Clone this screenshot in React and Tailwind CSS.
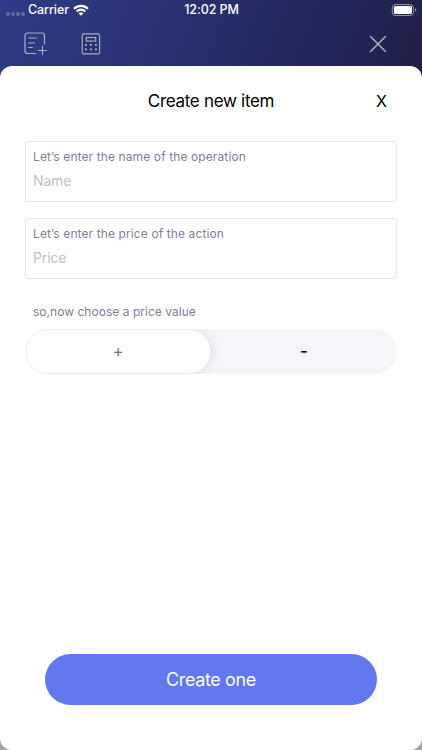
import React from "react";

function StatusBar() {
  return (
    <div className="grid h-5 grid-cols-3 items-center pl-[6px] pr-[5px] text-[12.5px] font-medium leading-5 text-white">
      <div className="flex items-center">
        <div className="mt-[8px] flex gap-[1px]">
          {[0, 1, 2, 3].map((n) => (
            <span key={n} className="size-[4px] rounded-full bg-white/25" />
          ))}
        </div>
        <span className="ml-[3px] tracking-[-0.1px]">Carrier</span>
        <svg className="ml-[4px]" width="16" height="12" viewBox="0 0 16 12" fill="none" stroke="white" strokeWidth="2.1">
          <path d="M1 4.7a10 10 0 0 1 14 0" />
          <path d="M3.7 7.4a6.2 6.2 0 0 1 8.6 0" />
          <path d="M8 11.8 5.6 9.3a3.5 3.5 0 0 1 4.8 0z" fill="white" stroke="none" />
        </svg>
      </div>
      <div className="text-center tracking-[-0.1px]">12:02 PM</div>
      <div className="flex justify-end">
        <svg width="26" height="12" viewBox="0 0 26 12" fill="none">
          <rect x="1.3" y="0.5" width="21.1" height="11" rx="3" stroke="white" strokeOpacity="0.5" />
          <rect x="2.9" y="2" width="18" height="8" rx="1.5" fill="white" />
          <path d="M24 4v4c1.6-.7 1.6-3.3 0-4z" fill="white" fillOpacity="0.5" />
        </svg>
      </div>
    </div>
  );
}

function Toolbar() {
  return (
    <div className="flex h-[46px] items-start pl-6 pr-[35px] pt-3 text-[#aeb0bd]">
      <svg width="24" height="24" viewBox="0 0 24 24" fill="none" stroke="currentColor" strokeWidth="1.2">
        <path d="M20.5 12.5V3.500a2.500 2.500 0 0 0-2.500-2.500H3.500A2.500 2.500 0 0 0 1 3.500v15.500a2.500 2.500 0 0 0 2.500 2.500H12" />
        <path d="M4.300 6h8.500M4.300 11h6.500M4.300 15.500h4.500M18.500 14v9M14 18.500h9" />
      </svg>
      <svg className="ml-[33px]" width="20" height="24" viewBox="0 0 20 24" fill="none" stroke="currentColor" strokeWidth="1.1">
        <rect x="1.200" y="1.900" width="17.400" height="20" rx="1.500" />
        <rect x="5.300" y="5.500" width="9.400" height="3.600" />
        <g fill="currentColor" stroke="none">
          {[12.8, 17.3].map((y) =>
            [5, 10, 15].map((x) => <rect key={x + "-" + y} x={x - 1} y={y - 0.8} width="1.900" height="1.800" />)
          )}
        </g>
      </svg>
      <svg className="ml-auto mt-[3px]" width="18" height="18" viewBox="0 0 18 18" stroke="currentColor" strokeWidth="1.500" strokeLinecap="round">
        <path d="m1.500 1.500 15 15M16.500 1.500l-15 15" />
      </svg>
    </div>
  );
}

function Field({ label, placeholder }) {
  return (
    <label className="flex h-[61px] flex-col rounded-[3px] border border-[#e7e7e9] px-[7px] pt-[6px]">
      <span className="text-[12px] leading-[18px] tracking-[0.11px] text-[#7d7f98]">{label}</span>
      <input
        className="mt-[5px] h-5 w-full bg-transparent p-0 text-[14px] leading-5 tracking-[-0.15px] outline-none placeholder:text-[#c1c1c4]"
        placeholder={placeholder}
      />
    </label>
  );
}

export default function App() {
  return (
    <div className="flex h-[750px] w-[422px] flex-col overflow-hidden font-['Inter','Liberation_Sans',sans-serif]">
      <div className="bg-[linear-gradient(110deg,#2e3b87,#262d68_55%,#1f1f48)]">
        <StatusBar />
        <Toolbar />
      </div>
      <main className="flex flex-1 flex-col bg-[#a4a59a]">
        <div className="flex flex-1 flex-col bg-[linear-gradient(90deg,#2e3b87_50%,#1f1f48_50%)] bg-[length:100%_20px] bg-no-repeat">
          <section className="flex flex-1 flex-col rounded-[12px] bg-white px-[25px]">
            <header className="grid grid-cols-[1fr_auto_1fr] items-center pt-[23px] text-[17px] leading-6 text-black">
              <h1 className="col-start-2 tracking-[-0.3px]">Create new item</h1>
              <button className="justify-self-end pr-[10px] text-[16px]">X</button>
            </header>
            <form className="mt-[28px] flex flex-1 flex-col">
              <div className="flex flex-col gap-4">
                <Field label="Let’s enter the name of the operation" placeholder="Name" />
                <Field label="Let’s enter the price of the action" placeholder="Price" />
              </div>
              <p className="ml-2 mt-[23.500px] text-[12px] leading-[18px] tracking-[0.03px] text-[#7d7f98]">so,now choose a price value</p>
              <div className="mt-[8.500px] grid h-[45px] grid-cols-2 overflow-hidden rounded-full bg-[#f5f5fa] text-[17px]">
                <button type="button" className="rounded-full border border-[#efeff2] bg-white text-[#66788c] shadow-[3px_0_12px_rgba(40,40,80,0.09)]">+</button>
                <button type="button" className="font-medium text-black">-</button>
              </div>
              <button type="button" className="mx-5 mb-[45px] mt-auto h-[51px] rounded-full bg-[#6178ef] text-[18px] tracking-[-0.38px] text-white">Create one</button>
            </form>
          </section>
        </div>
      </main>
    </div>
  );
}
